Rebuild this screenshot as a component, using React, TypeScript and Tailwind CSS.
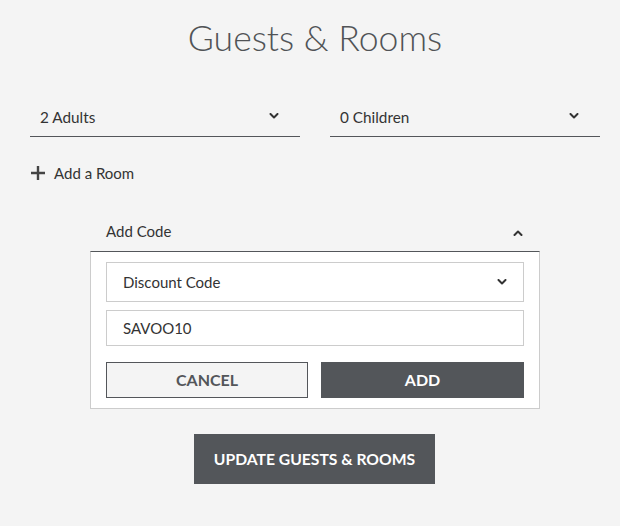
import React from "react";

function Chevron({ up = false, className = "" }: { up?: boolean; className?: string }) {
  return (
    <svg
      width="10"
      height="6"
      viewBox="0 0 10 6"
      className={className}
      fill="none"
      stroke="#333"
      strokeWidth="2"
      strokeLinecap="round"
      strokeLinejoin="round"
    >
      {up ? <polyline points="1.5,5 5,1.5 8.5,5" /> : <polyline points="1.5,1 5,4.5 8.5,1" />}
    </svg>
  );
}

function UnderlineSelect({ label }: { label: string }) {
  return (
    <div className="flex h-[41px] items-center justify-between border-b border-[#53565a] pl-[10px] pr-[21px]">
      <span className="mt-[2px] text-[15.3px]">{label}</span>
      <Chevron />
    </div>
  );
}

export default function App() {
  return (
    <div className="min-h-[526px] w-full overflow-hidden bg-[#f4f4f4] pl-[30px] pr-[20px] pt-[16px] font-['Lato','Liberation_Sans',sans-serif] text-[#333]">
      <h1 className="text-center font-['Lato_Light','Lato','Liberation_Sans',sans-serif] text-[35.6px] font-light leading-[43px] text-[#505356]">
        Guests &amp; Rooms
      </h1>

      <div className="mt-[37px] grid grid-cols-2 gap-[30px]">
        <UnderlineSelect label="2 Adults" />
        <UnderlineSelect label="0 Children" />
      </div>

      <div className="mt-[24px] flex h-[24px] items-center">
        <svg width="16" height="16" viewBox="0 0 16 16" className="mr-[8px]">
          <path d="M8 1v14M1 8h14" stroke="#444" strokeWidth="2.4" />
        </svg>
        <span className="text-[15px]">Add a Room</span>
      </div>

      <div className="mx-auto mt-[26px] w-[450px]">
        <div className="flex h-[40px] items-center justify-between pl-[16px] pr-[17px]">
          <span className="text-[15px]">Add Code</span>
          <Chevron up className="mt-[3px]" />
        </div>
        <div className="flex flex-col border border-[#cccccc] border-t-[#53565a] bg-white px-[15px] pb-[10px] pt-[10px]">
          <div className="flex h-[40px] items-center justify-between border border-[#cccccc] pl-[16px] pr-[16px]">
            <span className="text-[15px]">Discount Code</span>
            <Chevron />
          </div>
          <div className="mt-[8px] flex h-[36px] items-center border border-[#cccccc] pl-[16px]">
            <span className="text-[15px]">SAVOO10</span>
          </div>
          <div className="mt-[16px] grid grid-cols-[202px_1fr] gap-[13px]">
            <button className="h-[36px] border border-[#53565a] bg-[#f4f4f4] text-[16px] font-bold text-[#53565a]">
              CANCEL
            </button>
            <button className="h-[36px] bg-[#53565a] text-[16px] font-bold text-white">ADD</button>
          </div>
        </div>
      </div>

      <div className="mt-[25px] flex justify-center">
        <button className="-ml-[1px] h-[50px] w-[241px] bg-[#53565a] pt-[2px] text-[15.7px] font-bold text-white">
          UPDATE GUESTS &amp; ROOMS
        </button>
      </div>
    </div>
  );
}
